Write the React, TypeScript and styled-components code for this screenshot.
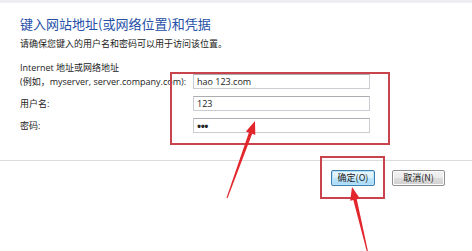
import React from 'react';
import styled, {createGlobalStyle} from "styled-components";

const GlobalStyle = createGlobalStyle`
  html, body {
    margin: 0;
    padding: 0;
    background: #ffffff;
  }
  body {
    font-family: "Open Sans", "Noto Sans CJK SC", sans-serif;
    color: #222;
  }
`;

const Page = styled.div`
  position: relative;
  width: 472px;
  height: 251px;
  overflow: hidden;
  background: #fff;
  border-top: 3px solid #eceef1;
  box-sizing: border-box;
`;

const Body = styled.div`
  padding: 11px 0 0 20px;
  height: 158px;
  box-sizing: border-box;
  border-bottom: 1px solid #dcdcdc;
`;

const Title = styled.div`
  font-family: "Noto Sans CJK SC", sans-serif;
  font-size: 13px;
  line-height: 20px;
  color: #2650a8;
`;

const Hint = styled.div`
  margin-top: 4px;
  font-family: "Noto Sans CJK SC", sans-serif;
  font-size: 9px;
  line-height: 12px;
  color: #222;
`;

const Form = styled.div`
  margin-top: 11px;
  display: flex;
  flex-direction: column;
  gap: 7px;
`;

const Row = styled.div<{ $end?: boolean }>`
  display: flex;
  align-items: ${p => (p.$end ? "flex-end" : "center")};
`;

const Label = styled.div`
  width: 173px;
  font-size: 9px;
  line-height: 14px;
  color: #222;
  white-space: nowrap;
`;

const Field = styled.div<{ $dots?: boolean }>`
  width: 177px;
  height: 15px;
  box-sizing: border-box;
  border: 1px solid #c9ccd1;
  border-top-color: #abadb3;
  padding: 0 3px;
  font-size: ${p => (p.$dots ? "11px" : "9px")};
  font-weight: ${p => (p.$dots ? 700 : 400)};
  line-height: 13px;
  letter-spacing: ${p => (p.$dots ? "-0.5px" : "0")};
  color: #222;
  background: #fff;
`;

const Buttons = styled.div`
  display: flex;
  gap: 17px;
  padding: 9px 0 0 331px;
`;

const Button = styled.div<{ $primary?: boolean; $w: number }>`
  width: ${p => p.$w}px;
  height: 16px;
  box-sizing: border-box;
  border: 1px solid ${p => (p.$primary ? "#3c7fb1" : "#8e8f8f")};
  border-radius: 2px;
  background: ${p =>
    p.$primary
      ? "linear-gradient(#eaf6fd, #d9f0fc 50%, #bee6fd 51%, #a7d9f5)"
      : "linear-gradient(#f2f2f2, #ebebeb 50%, #dddddd 51%, #cfcfcf)"};
  box-shadow: inset 0 0 0 1px ${p => (p.$primary ? "#b6e3fb" : "#fcfcfc")};
  font-family: "Noto Sans CJK SC", sans-serif;
  font-size: 9px;
  line-height: 14px;
  text-align: center;
  color: #222;
`;

const Mark = styled.div<{ $x: number; $y: number; $w: number; $h: number }>`
  position: absolute;
  left: ${p => p.$x}px;
  top: ${p => p.$y}px;
  width: ${p => p.$w}px;
  height: ${p => p.$h}px;
  box-sizing: border-box;
  border: 2px solid #c8434b;
  pointer-events: none;
`;

const Overlay = styled.svg`
  position: absolute;
  left: 0;
  top: 0;
  pointer-events: none;
`;

// tapered arrow from tail to tip
function arrowPoints(tx: number, ty: number, px: number, py: number) {
  const len = Math.hypot(px - tx, py - ty);
  const dx = (px - tx) / len, dy = (py - ty) / len;
  const nx = -dy, ny = dx;
  const h = 13, w = 5;
  const bx = px - dx * h, by = py - dy * h;
  const pts = [
    [tx + nx * 0.5, ty + ny * 0.5],
    [bx + nx * 1.8, by + ny * 1.8],
    [bx + nx * w, by + ny * w],
    [px, py],
    [bx - nx * w, by - ny * w],
    [bx - nx * 1.8, by - ny * 1.8],
    [tx - nx * 0.5, ty - ny * 0.5],
  ];
  return pts.map(p => p[0].toFixed(1) + "," + p[1].toFixed(1)).join(" ");
}

export default function App() {
  return (
    <>
      <GlobalStyle/>
      <Page>
        <Body>
          <Title>键入网站地址(或网络位置)和凭据</Title>
          <Hint>请确保您键入的用户名和密码可以用于访问该位置。</Hint>
          <Form>
            <Row $end>
              <Label>Internet 地址或网络地址<br/>(例如，myserver, server.company.com):</Label>
              <Field>hao 123.com</Field>
            </Row>
            <Row>
              <Label>用户名:</Label>
              <Field>123</Field>
            </Row>
            <Row>
              <Label>密码:</Label>
              <Field $dots>•••</Field>
            </Row>
          </Form>
        </Body>
        <Buttons>
          <Button $primary $w={44}>确定(O)</Button>
          <Button $w={53}>取消(N)</Button>
        </Buttons>

        <Mark $x={170} $y={69} $w={220} $h={73}/>
        <Mark $x={320} $y={153} $w={65} $h={43}/>
        <Overlay width={472} height={251}>
          <polygon points={arrowPoints(227, 195, 255, 118)} fill="#e2262c"/>
          <polygon points={arrowPoints(368, 251, 352, 184)} fill="#e2262c"/>
        </Overlay>
      </Page>
    </>
  );
}
